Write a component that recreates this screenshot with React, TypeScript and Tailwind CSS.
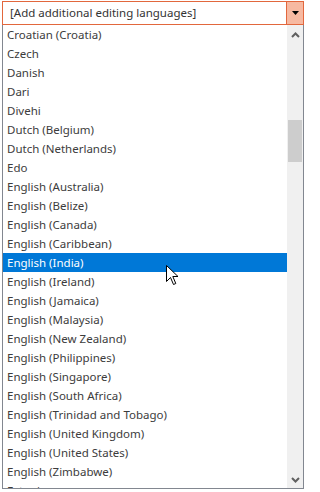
import React from "react";

const languages = [
  "Croatian (Croatia)",
  "Czech",
  "Danish",
  "Dari",
  "Divehi",
  "Dutch (Belgium)",
  "Dutch (Netherlands)",
  "Edo",
  "English (Australia)",
  "English (Belize)",
  "English (Canada)",
  "English (Caribbean)",
  "English (India)",
  "English (Ireland)",
  "English (Jamaica)",
  "English (Malaysia)",
  "English (New Zealand)",
  "English (Philippines)",
  "English (Singapore)",
  "English (South Africa)",
  "English (Trinidad and Tobago)",
  "English (United Kingdom)",
  "English (United States)",
  "English (Zimbabwe)",
  "Estonian",
];

const selected = "English (India)";

function Chevron({ up }: { up?: boolean }) {
  return (
    <svg width="9" height="6" viewBox="0 0 9 6" className={up ? "" : "rotate-180"}>
      <path d="M1 5L4.5 1.5L8 5" stroke="#606060" strokeWidth="2" fill="none" />
    </svg>
  );
}

function Cursor() {
  return (
    <svg width="13" height="21" viewBox="0 0 13 21" className="absolute left-[166px] top-[265px]">
      <path
        d="M0.5 0.5L0.5 16.5L4.5 12.5L7.5 19.5L9.8 18.5L6.8 11.5L12 11.5Z"
        fill="white"
        stroke="black"
        strokeWidth="1"
      />
    </svg>
  );
}

export default function App() {
  return (
    <div
      className="relative w-[305px] h-[492px] bg-white overflow-hidden"
      style={{ fontFamily: '"Noto Sans", "Open Sans", sans-serif' }}
    >
      <div className="ml-[2px] mt-[1px] w-[302px] h-[24px] border border-[#e2673d] flex">
        <div className="flex-1 pl-[7px] text-[11.5px] leading-[22px] text-[#333]">
          [Add additional editing languages]
        </div>
        <div className="w-[17px] bg-[#f7b9a1] border-l border-[#e2673d] flex items-center justify-center">
          <svg width="7" height="4" viewBox="0 0 7 4">
            <path d="M0 0H7L3.5 4Z" fill="#000" />
          </svg>
        </div>
      </div>

      <div className="ml-[2px] w-[302px] h-[464px] border border-t-0 border-[#828790] flex overflow-hidden">
        <div className="flex-1 min-w-0 overflow-hidden">
          {languages.map((lang) => (
            <div
              key={lang}
              className={`h-[19px] pl-[4px] text-[11.5px] leading-[19px] whitespace-nowrap ${
                lang === selected ? "bg-[#0078d7] text-white" : "text-[#3c3c3c]"
              }`}
            >
              {lang}
            </div>
          ))}
        </div>
        <div className="w-[16px] bg-[#f0f0f0] flex flex-col">
          <div className="h-[17px] flex items-center justify-center pt-[2px]">
            <Chevron up />
          </div>
          <div className="h-[78px]" />
          <div className="h-[42px] mx-[1px] bg-[#cdcdcd]" />
          <div className="flex-1" />
          <div className="h-[17px] flex items-center justify-center">
            <Chevron />
          </div>
        </div>
      </div>

      <Cursor />
    </div>
  );
}
